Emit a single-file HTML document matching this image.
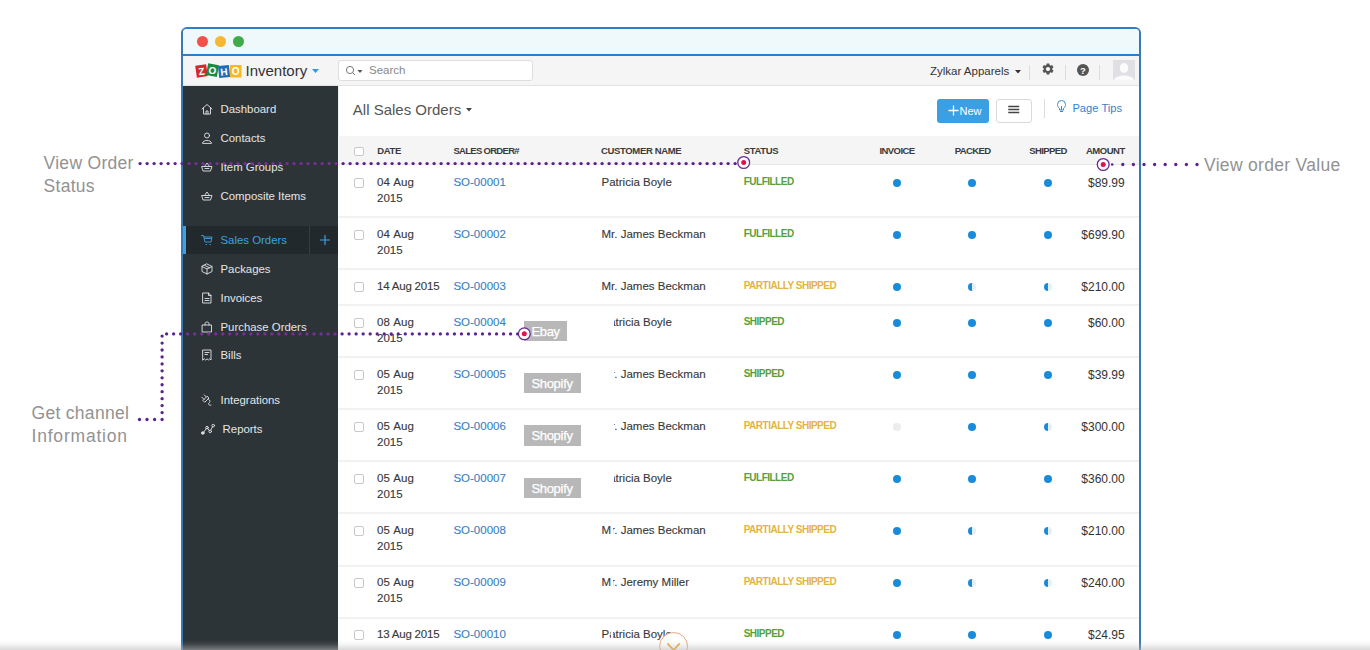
<!DOCTYPE html>
<html><head><meta charset="utf-8">
<style>
*{margin:0;padding:0;box-sizing:border-box}
html,body{width:1370px;height:650px;overflow:hidden;background:#fff;font-family:"Liberation Sans",sans-serif;position:relative}
.a{position:absolute;white-space:nowrap}
.ann{position:absolute;color:#929292;font-size:17.5px;line-height:23px;letter-spacing:0.3px;white-space:nowrap}
#win{position:absolute;left:181px;top:27px;width:960px;height:640px;border:2px solid #3878b4;border-top-color:#2e7ecb;border-radius:6px 6px 0 0;background:#fff;overflow:hidden}
#title{position:absolute;left:0;top:0;width:956px;height:27px;background:#eff9fc;border-bottom:2px solid #2c7dcc}
.tl{position:absolute;top:7px;width:11px;height:11px;border-radius:50%}
#hdr{position:absolute;left:0;top:27px;width:956px;height:30px;background:#f5f5f5;border-bottom:1px solid #e3e3e3}
#side{position:absolute;left:0;top:57px;width:155px;height:600px;background:#2c3438}
.si{position:absolute;color:#e4e6e7;font-size:11.4px;line-height:14px;white-space:nowrap}
.ic{position:absolute;left:18px}
#main{position:absolute;left:155px;top:57px;width:801px;height:600px;background:#fff}
.th{position:absolute;top:10.3px;font-size:9.5px;letter-spacing:-0.35px;font-weight:700;color:#3a3a3a;line-height:10px;white-space:nowrap}
.cb{position:absolute;width:9.5px;height:9.5px;border:1px solid #c8c8c8;border-radius:2px;background:#fff}
.row{position:absolute;left:0;width:801px}
.rs{position:absolute;left:338px;width:801px;height:2px;background:#f2f2f2}
.c{position:absolute;font-size:11.5px;line-height:16px;color:#383838;white-space:nowrap;-webkit-text-stroke:0.12px currentColor}
.lk{color:#3b80c6}
.st{position:absolute;font-size:10px;font-weight:700;letter-spacing:-0.5px;line-height:12px;white-space:nowrap}
.g{color:#55a03a}.y{color:#e3b440}
.dot{position:absolute;width:8px;height:8px;border-radius:50%;background:#1a8bd9}
.dot.hd{background:linear-gradient(90deg,#1a8bd9 50%,#e6eef5 50%)}
.dot.ed{background:#ececec}
.amt{position:absolute;right:14.3px;font-size:12px;line-height:16px;color:#333;text-align:right;white-space:nowrap}
.dl{position:absolute;height:4px;background-image:radial-gradient(circle at 50% 50%,#5b2290 1.5px,transparent 1.9px);background-size:7px 4px;background-repeat:repeat-x}
.dv{position:absolute;width:4px;background-image:radial-gradient(circle at 50% 50%,#5b2290 1.5px,transparent 1.9px);background-size:4px 7px;background-repeat:repeat-y}
.mk{position:absolute;width:13px;height:13px;border:1.3px solid #6a2a90;border-radius:50%;background:#fff}
.mk:after{content:"";position:absolute;left:2.9px;top:2.9px;width:4.6px;height:4.6px;border-radius:50%;background:#e3104f}
.tag{position:absolute;background:#b8b8b8;color:#fff;font-size:13px;letter-spacing:-0.3px;line-height:22px;padding-left:7.6px;white-space:nowrap;-webkit-text-stroke:0.25px #fff}
.sep{position:absolute;width:1px;background:#dcdcdc}
</style></head><body>

<!-- annotations -->
<div class="ann" style="left:43.5px;top:152px">View Order<br>Status</div>
<div class="ann" style="left:31.5px;top:402px">Get channel<br><span style="letter-spacing:0.8px">Information</span></div>
<div class="ann" style="left:1204px;top:154px">View order Value</div>

<div id="win">
  <div id="title">
    <div class="tl" style="left:14px;background:#f2504b"></div>
    <div class="tl" style="left:32px;background:#f5b82e"></div>
    <div class="tl" style="left:50px;background:#3fab4a"></div>
  </div>
  <div id="hdr">
    <!-- zoho logo -->
    <svg class="a" style="left:12.2px;top:6px" width="48" height="18" viewBox="0 0 48 18">
      <g transform="rotate(-8 6 9)"><rect x="1" y="3" width="11" height="12" fill="#d8262e"/><text x="6.5" y="13" font-family="Liberation Sans" font-weight="700" font-size="10" fill="#fff" text-anchor="middle">Z</text></g>
      <g transform="rotate(10 17 8)"><rect x="12" y="2" width="11" height="12" fill="#1a8c40"/><text x="17.5" y="12" font-family="Liberation Sans" font-weight="700" font-size="10" fill="#fff" text-anchor="middle">O</text></g>
      <g transform="rotate(-6 29 9)"><rect x="23.5" y="3.5" width="11" height="12" fill="#1f6fb8"/><text x="29" y="13.5" font-family="Liberation Sans" font-weight="700" font-size="10" fill="#fff" text-anchor="middle">H</text></g>
      <rect x="35" y="3" width="11.5" height="12.5" fill="#f4b828"/><text x="40.7" y="13.2" font-family="Liberation Sans" font-weight="700" font-size="10" fill="#fff" text-anchor="middle">O</text>
    </svg>
    <div class="a" style="left:62.5px;top:6.4px;font-size:15px;line-height:18px;color:#333">Inventory</div>
    <svg class="a" style="left:129px;top:13px" width="7" height="4" viewBox="0 0 7 4"><path d="M0 0H7L3.5 4Z" fill="#2e9be0"/></svg>
    <!-- search -->
    <div class="a" style="left:154.8px;top:3.7px;width:195px;height:21.5px;background:#fff;border:1px solid #dedede;border-radius:3px"></div>
    <svg class="a" style="left:162px;top:8.5px" width="20" height="12" viewBox="0 0 20 12" fill="none" stroke="#777" stroke-width="1"><circle cx="5" cy="5" r="3.6"/><path d="M7.6 7.6L10 10"/><path d="M12.5 5H17.5L15 8Z" fill="#555" stroke="none"/></svg>
    <div class="a" style="left:186px;top:7px;font-size:11.5px;line-height:14px;color:#888">Search</div>
    <!-- right -->
    <div class="a" style="left:747px;top:7.6px;font-size:11.5px;line-height:14px;color:#333">Zylkar Apparels</div>
    <svg class="a" style="left:832px;top:13.8px" width="6" height="4" viewBox="0 0 6 4"><path d="M0 0H6L3 3.5Z" fill="#333"/></svg>
    <div class="sep" style="left:845.5px;top:9px;height:15px"></div>
    <svg class="a" style="left:858px;top:6px" width="14" height="14" viewBox="0 0 24 24"><path fill="#555" d="M19.14 12.94c.04-.3.06-.61.06-.94 0-.32-.02-.64-.07-.94l2.03-1.58a.49.49 0 0 0 .12-.61l-1.92-3.32a.488.488 0 0 0-.59-.22l-2.39.96c-.5-.38-1.03-.7-1.62-.94l-.36-2.54a.484.484 0 0 0-.48-.41h-3.84c-.24 0-.43.17-.47.41l-.36 2.54c-.59.24-1.13.57-1.62.94l-2.39-.96c-.22-.08-.47 0-.59.22L2.74 8.87c-.12.21-.08.47.12.61l2.03 1.58c-.05.3-.09.63-.09.94s.02.64.07.94l-2.03 1.58a.49.49 0 0 0-.12.61l1.92 3.32c.12.22.37.29.59.22l2.39-.96c.5.38 1.03.7 1.62.94l.36 2.54c.05.24.24.41.48.41h3.84c.24 0 .44-.17.47-.41l.36-2.54c.59-.24 1.13-.56 1.62-.94l2.39.96c.22.08.47 0 .59-.22l1.92-3.32c.12-.22.07-.47-.12-.61l-2.01-1.58zM12 15.6c-1.98 0-3.6-1.62-3.6-3.6s1.62-3.6 3.6-3.6 3.6 1.62 3.6 3.6-1.62 3.6-3.6 3.6z"/></svg>
    <div class="sep" style="left:882.3px;top:9px;height:15px"></div>
    <svg class="a" style="left:893.5px;top:7.5px" width="12" height="12" viewBox="0 0 12 12"><circle cx="6" cy="6" r="6" fill="#555"/><text x="6" y="9.6" font-family="Liberation Sans" font-weight="700" font-size="9.5" fill="#fff" text-anchor="middle">?</text></svg>
    <div class="sep" style="left:916px;top:9px;height:15px"></div>
    <svg class="a" style="left:930px;top:4px" width="22" height="20" viewBox="0 0 22 20"><rect width="22" height="20" fill="#dfdfe4"/><ellipse cx="11" cy="8" rx="4.2" ry="5" fill="#fbfbfc"/><path d="M1 20C2 14 20 14 21 20Z" fill="#fbfbfc"/></svg>
  </div>
  <div id="side">
    <div class="a" style="left:0;top:140px;width:155px;height:28px;background:#22292c"></div>
    <div class="a" style="left:0;top:140px;width:3px;height:28px;background:#3ea1e2"></div>
    <div class="a" style="left:126px;top:140px;width:1px;height:28px;background:#353d41"></div>
    <svg class="a" style="left:137px;top:149px" width="10" height="10" viewBox="0 0 10 10"><path d="M5 0V10M0 5H10" stroke="#3ea1e2" stroke-width="1.2"/></svg>
<svg class="ic" style="top:17px" width="14" height="12" viewBox="0 0 14 12" fill="none" stroke="#e4e6e7" stroke-width="0.9" stroke-linejoin="round" stroke-linecap="round"><path d="M1 6 L6 1.5 L11 6 M2.5 5 V11 H9.5 V5 M5 11 V8 H7 V11" /></svg>
<div class="si" style="left:37.5px;top:16px;color:#e4e6e7">Dashboard</div>
<svg class="ic" style="top:46px" width="14" height="12" viewBox="0 0 14 12" fill="none" stroke="#e4e6e7" stroke-width="0.9" stroke-linejoin="round" stroke-linecap="round"><circle cx="6" cy="3.5" r="2.5"/><path d="M1.5 11 C1.5 7.5 10.5 7.5 10.5 11 Z"/></svg>
<div class="si" style="left:37.5px;top:45px;color:#e4e6e7">Contacts</div>
<svg class="ic" style="top:74.9px" width="14" height="12" viewBox="0 0 14 12" fill="none" stroke="#e4e6e7" stroke-width="0.9" stroke-linejoin="round" stroke-linecap="round"><path d="M1 5.5 H11 L9.5 10 H2.5 Z M3.5 5.5 L6 2 L8.5 5.5 M4 7.5 H8"/></svg>
<div class="si" style="left:37.5px;top:73.9px;color:#e4e6e7">Item Groups</div>
<svg class="ic" style="top:103.9px" width="14" height="12" viewBox="0 0 14 12" fill="none" stroke="#e4e6e7" stroke-width="0.9" stroke-linejoin="round" stroke-linecap="round"><path d="M1 5.5 H11 L9.5 10 H2.5 Z M3.5 5.5 L6 2 L8.5 5.5 M4 7.5 H8"/></svg>
<div class="si" style="left:37.5px;top:102.9px;color:#e4e6e7">Composite Items</div>
<svg class="ic" style="top:148px" width="14" height="12" viewBox="0 0 14 12" fill="none" stroke="#3ea1e2" stroke-width="0.9" stroke-linejoin="round" stroke-linecap="round"><path d="M0.5 1.5 H2.5 L4 8 H10 L11 3 H3 M4.5 4.5 H10 M5 10.5 h0.5 M9 10.5 h0.5"/></svg>
<div class="si" style="left:37.5px;top:147px;color:#3ea1e2">Sales Orders</div>
<svg class="ic" style="top:177px" width="14" height="12" viewBox="0 0 14 12" fill="none" stroke="#e4e6e7" stroke-width="0.9" stroke-linejoin="round" stroke-linecap="round"><path d="M6 1 L11 3.5 V8.5 L6 11 L1 8.5 V3.5 Z M1 3.5 L6 6 L11 3.5 M6 6 V11 M3.5 2.3 L8.5 4.8"/></svg>
<div class="si" style="left:37.5px;top:176px;color:#e4e6e7">Packages</div>
<svg class="ic" style="top:205.6px" width="14" height="12" viewBox="0 0 14 12" fill="none" stroke="#e4e6e7" stroke-width="0.9" stroke-linejoin="round" stroke-linecap="round"><path d="M2 1 H7.5 L10 3.5 V11 H2 Z M7.5 1 V3.5 H10 M4 6.5 H8 M4 8.5 H8"/></svg>
<div class="si" style="left:37.5px;top:204.6px;color:#e4e6e7">Invoices</div>
<svg class="ic" style="top:234.6px" width="14" height="12" viewBox="0 0 14 12" fill="none" stroke="#e4e6e7" stroke-width="0.9" stroke-linejoin="round" stroke-linecap="round"><path d="M1.5 4 H10.5 V11 H1.5 Z M4 4 V2.5 C4 0.5 8 0.5 8 2.5 V4"/></svg>
<div class="si" style="left:37.5px;top:233.6px;color:#e4e6e7">Purchase Orders</div>
<svg class="ic" style="top:263.4px" width="14" height="12" viewBox="0 0 14 12" fill="none" stroke="#e4e6e7" stroke-width="0.9" stroke-linejoin="round" stroke-linecap="round"><path d="M2 1 H10 V11 L8.7 9.8 L7.3 11 L6 9.8 L4.7 11 L3.3 9.8 L2 11 Z M4 3.5 H8 M4 5.5 H6.5"/></svg>
<div class="si" style="left:37.5px;top:262.4px;color:#e4e6e7">Bills</div>
<svg class="ic" style="top:308px" width="14" height="12" viewBox="0 0 14 12" fill="none" stroke="#e4e6e7" stroke-width="0.9" stroke-linejoin="round" stroke-linecap="round"><path d="M0.8 3.2 L3 5.4 M3.2 0.8 L5.4 3 M2.2 6.2 L6.2 2.2 L8 4 L4 8 Z M7.2 5 C9.8 6.5 9 8 8 9 C7 10 7.5 11.5 10 11.2"/></svg>
<div class="si" style="left:37.5px;top:307px;color:#e4e6e7">Integrations</div>
<svg class="ic" style="top:336.6px" width="14" height="12" viewBox="0 0 14 12" fill="none" stroke="#e4e6e7" stroke-width="0.9" stroke-linejoin="round" stroke-linecap="round"><path d="M2.6 9.2 L5.4 5.4 M6.6 5.4 L8.4 7.6 M9.8 7 L11.6 3.6"/><circle cx="1.8" cy="10" r="1.3" fill="#cfd3d5"/><circle cx="6" cy="4.6" r="1.3"/><circle cx="9.2" cy="8.4" r="1.3"/><circle cx="12.2" cy="2.6" r="1.3"/></svg>
<div class="si" style="left:39.6px;top:335.6px;color:#e4e6e7">Reports</div>
  </div>
  <div id="main">
    <div class="a" style="left:0;top:0;width:1px;height:50px;background:#f0f0f0"></div>
    <div class="a" style="left:14.8px;top:14.7px;font-size:15px;line-height:18px;color:#555">All Sales Orders</div>
    <svg class="a" style="left:128px;top:22px" width="6" height="4" viewBox="0 0 6 4"><path d="M0 0H6L3 3.5Z" fill="#444"/></svg>
    <div class="a" style="left:599.2px;top:13px;width:51.4px;height:23.7px;background:#3aa0e3;border-radius:3px"></div>
    <svg class="a" style="left:609.5px;top:19px" width="11" height="11" viewBox="0 0 11 11"><path d="M5.5 0.5V10.5M0.5 5.5H10.5" stroke="#fff" stroke-width="1.3"/></svg>
    <div class="a" style="left:621.5px;top:17.8px;font-size:11px;line-height:14px;color:#fff;letter-spacing:0px">New</div>
    <div class="a" style="left:658.4px;top:12.5px;width:35.3px;height:24.5px;background:#fff;border:1px solid #dadada;border-radius:3px"></div>
    <svg class="a" style="left:670px;top:19.3px" width="11.5" height="9" viewBox="0 0 11 9"><path d="M0 1.5H11M0 4.5H11M0 7.5H11" stroke="#444" stroke-width="1.3"/></svg>
    <div class="sep" style="left:706px;top:12.5px;height:19.5px"></div>
    <svg class="a" style="left:719px;top:14px" width="9" height="13" viewBox="0 0 9 13" fill="none" stroke="#3a8ad0" stroke-width="1"><path d="M2.5 8.5C1 7 0.5 6 0.5 4.5A4 4 0 0 1 8.5 4.5C8.5 6 8 7 6.5 8.5V10H2.5Z"/><path d="M3 11.5H6"/><path d="M4.5 10V6"/></svg>
    <div class="a" style="left:734.4px;top:14.8px;font-size:11.2px;line-height:14px;color:#3b80c6">Page Tips</div>

    <!-- table header -->
    <div class="a" style="left:0;top:50px;width:801px;height:28px;background:#f5f5f5">
      <div class="cb" style="left:16px;top:10.5px"></div>
      <div class="th" style="left:39.2px">DATE</div>
      <div class="th" style="left:115.4px;letter-spacing:-0.7px">SALES ORDER#</div>
      <div class="th" style="left:263px">CUSTOMER NAME</div>
      <div class="th" style="left:405.7px">STATUS</div>
      <div class="th" style="left:519px;width:80px;text-align:center;letter-spacing:-0.6px">INVOICE</div>
      <div class="th" style="left:594.6px;width:80px;text-align:center;letter-spacing:-0.6px">PACKED</div>
      <div class="th" style="left:670px;width:80px;text-align:center;letter-spacing:-0.6px">SHIPPED</div>
      <div class="th" style="right:14.3px;text-align:right;letter-spacing:-0.5px">AMOUNT</div>
    </div>
<div class="row" style="top:78px;height:52px"><div class="cb" style="left:16px;top:14.2px"></div><div class="c" style="left:39px;top:10.2px;word-spacing:1px">04 Aug<br>2015</div><div class="c lk" style="left:115.4px;top:10.2px">SO-00001</div><div class="c" style="left:263.5px;top:10.2px">Patricia Boyle</div><div class="st g" style="left:405.7px;top:12px">FULFILLED</div><div class="dot" style="left:554.8px;top:14.8px"></div><div class="dot" style="left:630.2px;top:14.8px"></div><div class="dot" style="left:705.6px;top:14.8px"></div><div class="amt" style="top:10.6px">$89.99</div></div>
<div class="row" style="top:130px;height:52px"><div class="cb" style="left:16px;top:14.2px"></div><div class="c" style="left:39px;top:10.2px;word-spacing:1px">04 Aug<br>2015</div><div class="c lk" style="left:115.4px;top:10.2px">SO-00002</div><div class="c" style="left:263.5px;top:10.2px">Mr. James Beckman</div><div class="st g" style="left:405.7px;top:12px">FULFILLED</div><div class="dot" style="left:554.8px;top:14.8px"></div><div class="dot" style="left:630.2px;top:14.8px"></div><div class="dot" style="left:705.6px;top:14.8px"></div><div class="amt" style="top:10.6px">$699.90</div></div>
<div class="row" style="top:182px;height:36px"><div class="cb" style="left:16px;top:14.2px"></div><div class="c" style="left:39px;top:10.2px;letter-spacing:-0.2px">14 Aug 2015</div><div class="c lk" style="left:115.4px;top:10.2px">SO-00003</div><div class="c" style="left:263.5px;top:10.2px">Mr. James Beckman</div><div class="st y" style="left:405.7px;top:12px">PARTIALLY SHIPPED</div><div class="dot" style="left:554.8px;top:14.8px"></div><div class="dot hd" style="left:630.2px;top:14.8px"></div><div class="dot hd" style="left:705.6px;top:14.8px"></div><div class="amt" style="top:10.6px">$210.00</div></div>
<div class="row" style="top:218px;height:52px"><div class="cb" style="left:16px;top:14.2px"></div><div class="c" style="left:39px;top:10.2px;word-spacing:1px">08 Aug<br>2015</div><div class="c lk" style="left:115.4px;top:10.2px">SO-00004</div><div class="c" style="left:263.5px;top:10.2px">Patricia Boyle</div><div class="st g" style="left:405.7px;top:12px">SHIPPED</div><div class="dot" style="left:554.8px;top:14.8px"></div><div class="dot" style="left:630.2px;top:14.8px"></div><div class="dot" style="left:705.6px;top:14.8px"></div><div class="amt" style="top:10.6px">$60.00</div></div>
<div class="row" style="top:270px;height:52px"><div class="cb" style="left:16px;top:14.2px"></div><div class="c" style="left:39px;top:10.2px;word-spacing:1px">05 Aug<br>2015</div><div class="c lk" style="left:115.4px;top:10.2px">SO-00005</div><div class="c" style="left:263.5px;top:10.2px">Mr. James Beckman</div><div class="st g" style="left:405.7px;top:12px">SHIPPED</div><div class="dot" style="left:554.8px;top:14.8px"></div><div class="dot" style="left:630.2px;top:14.8px"></div><div class="dot" style="left:705.6px;top:14.8px"></div><div class="amt" style="top:10.6px">$39.99</div></div>
<div class="row" style="top:322px;height:52px"><div class="cb" style="left:16px;top:14.2px"></div><div class="c" style="left:39px;top:10.2px;word-spacing:1px">05 Aug<br>2015</div><div class="c lk" style="left:115.4px;top:10.2px">SO-00006</div><div class="c" style="left:263.5px;top:10.2px">Mr. James Beckman</div><div class="st y" style="left:405.7px;top:12px">PARTIALLY SHIPPED</div><div class="dot ed" style="left:554.8px;top:14.8px"></div><div class="dot" style="left:630.2px;top:14.8px"></div><div class="dot hd" style="left:705.6px;top:14.8px"></div><div class="amt" style="top:10.6px">$300.00</div></div>
<div class="row" style="top:374px;height:52px"><div class="cb" style="left:16px;top:14.2px"></div><div class="c" style="left:39px;top:10.2px;word-spacing:1px">05 Aug<br>2015</div><div class="c lk" style="left:115.4px;top:10.2px">SO-00007</div><div class="c" style="left:263.5px;top:10.2px">Patricia Boyle</div><div class="st g" style="left:405.7px;top:12px">FULFILLED</div><div class="dot" style="left:554.8px;top:14.8px"></div><div class="dot" style="left:630.2px;top:14.8px"></div><div class="dot" style="left:705.6px;top:14.8px"></div><div class="amt" style="top:10.6px">$360.00</div></div>
<div class="row" style="top:426px;height:52px"><div class="cb" style="left:16px;top:14.2px"></div><div class="c" style="left:39px;top:10.2px;word-spacing:1px">05 Aug<br>2015</div><div class="c lk" style="left:115.4px;top:10.2px">SO-00008</div><div class="c" style="left:263.5px;top:10.2px">Mr. James Beckman</div><div class="st y" style="left:405.7px;top:12px">PARTIALLY SHIPPED</div><div class="dot" style="left:554.8px;top:14.8px"></div><div class="dot hd" style="left:630.2px;top:14.8px"></div><div class="dot hd" style="left:705.6px;top:14.8px"></div><div class="amt" style="top:10.6px">$210.00</div></div>
<div class="row" style="top:478px;height:52px"><div class="cb" style="left:16px;top:14.2px"></div><div class="c" style="left:39px;top:10.2px;word-spacing:1px">05 Aug<br>2015</div><div class="c lk" style="left:115.4px;top:10.2px">SO-00009</div><div class="c" style="left:263.5px;top:10.2px">Mr. Jeremy Miller</div><div class="st y" style="left:405.7px;top:12px">PARTIALLY SHIPPED</div><div class="dot" style="left:554.8px;top:14.8px"></div><div class="dot hd" style="left:630.2px;top:14.8px"></div><div class="dot hd" style="left:705.6px;top:14.8px"></div><div class="amt" style="top:10.6px">$240.00</div></div>
<div class="row" style="top:530px;height:52px"><div class="cb" style="left:16px;top:14.2px"></div><div class="c" style="left:39px;top:10.2px;letter-spacing:-0.2px">13 Aug 2015</div><div class="c lk" style="left:115.4px;top:10.2px">SO-00010</div><div class="c" style="left:263.5px;top:10.2px">Patricia Boyle</div><div class="st g" style="left:405.7px;top:12px">SHIPPED</div><div class="dot" style="left:554.8px;top:14.8px"></div><div class="dot" style="left:630.2px;top:14.8px"></div><div class="dot" style="left:705.6px;top:14.8px"></div><div class="amt" style="top:10.6px">$24.95</div></div>
  </div>
</div>

<!-- channel tags + overlays -->
<div class="a" style="left:517px;top:305px;width:97px;height:208px;background:#fff"></div>
<div class="a" style="left:611.3px;top:513px;width:2.2px;height:137px;background:#fff"></div>
<div class="rs" style="top:216px"></div><div class="rs" style="top:268px"></div><div class="rs" style="top:304px"></div><div class="rs" style="top:356px"></div><div class="rs" style="top:408px"></div><div class="rs" style="top:460px"></div><div class="rs" style="top:512px"></div><div class="rs" style="top:565px"></div><div class="rs" style="top:617px"></div><div class="rs" style="top:164px;height:1px;background:#e9e9e9"></div>
<div class="tag" style="left:523.8px;top:320.8px;width:43px;height:20px">Ebay</div>
<div class="tag" style="left:523.8px;top:373px;width:57px;height:20.4px">Shopify</div>
<div class="tag" style="left:523.8px;top:425.4px;width:57px;height:20.4px">Shopify</div>
<div class="tag" style="left:523.8px;top:477.8px;width:57px;height:20.4px">Shopify</div>

<!-- dotted lines -->
<svg class="a" style="left:0;top:0" width="1370" height="650" viewBox="0 0 1370 650"><circle cx="140.10" cy="163.60" r="1.65" fill="#5b2290"/><circle cx="147.10" cy="163.60" r="1.65" fill="#5b2290"/><circle cx="154.10" cy="163.60" r="1.65" fill="#5b2290"/><circle cx="161.10" cy="163.60" r="1.65" fill="#5b2290"/><circle cx="168.10" cy="163.60" r="1.65" fill="#5b2290"/><circle cx="175.10" cy="163.60" r="1.65" fill="#5b2290"/><circle cx="182.10" cy="163.60" r="1.65" fill="#5b2290"/><circle cx="189.10" cy="163.60" r="1.65" fill="#7a2d9c"/><circle cx="196.10" cy="163.60" r="1.65" fill="#7a2d9c"/><circle cx="203.10" cy="163.60" r="1.65" fill="#7a2d9c"/><circle cx="210.10" cy="163.60" r="1.65" fill="#7a2d9c"/><circle cx="217.10" cy="163.60" r="1.65" fill="#7a2d9c"/><circle cx="224.10" cy="163.60" r="1.65" fill="#7a2d9c"/><circle cx="231.10" cy="163.60" r="1.65" fill="#7a2d9c"/><circle cx="238.10" cy="163.60" r="1.65" fill="#7a2d9c"/><circle cx="245.10" cy="163.60" r="1.65" fill="#7a2d9c"/><circle cx="252.10" cy="163.60" r="1.65" fill="#7a2d9c"/><circle cx="259.10" cy="163.60" r="1.65" fill="#7a2d9c"/><circle cx="266.10" cy="163.60" r="1.65" fill="#7a2d9c"/><circle cx="273.10" cy="163.60" r="1.65" fill="#7a2d9c"/><circle cx="280.10" cy="163.60" r="1.65" fill="#7a2d9c"/><circle cx="287.10" cy="163.60" r="1.65" fill="#7a2d9c"/><circle cx="294.10" cy="163.60" r="1.65" fill="#7a2d9c"/><circle cx="301.10" cy="163.60" r="1.65" fill="#7a2d9c"/><circle cx="308.10" cy="163.60" r="1.65" fill="#7a2d9c"/><circle cx="315.10" cy="163.60" r="1.65" fill="#7a2d9c"/><circle cx="322.10" cy="163.60" r="1.65" fill="#7a2d9c"/><circle cx="329.10" cy="163.60" r="1.65" fill="#7a2d9c"/><circle cx="336.10" cy="163.60" r="1.65" fill="#7a2d9c"/><circle cx="343.10" cy="163.60" r="1.65" fill="#5b2290"/><circle cx="350.10" cy="163.60" r="1.65" fill="#5b2290"/><circle cx="357.10" cy="163.60" r="1.65" fill="#5b2290"/><circle cx="364.10" cy="163.60" r="1.65" fill="#5b2290"/><circle cx="371.10" cy="163.60" r="1.65" fill="#5b2290"/><circle cx="378.10" cy="163.60" r="1.65" fill="#5b2290"/><circle cx="385.10" cy="163.60" r="1.65" fill="#5b2290"/><circle cx="392.10" cy="163.60" r="1.65" fill="#5b2290"/><circle cx="399.10" cy="163.60" r="1.65" fill="#5b2290"/><circle cx="406.10" cy="163.60" r="1.65" fill="#5b2290"/><circle cx="413.10" cy="163.60" r="1.65" fill="#5b2290"/><circle cx="420.10" cy="163.60" r="1.65" fill="#5b2290"/><circle cx="427.10" cy="163.60" r="1.65" fill="#5b2290"/><circle cx="434.10" cy="163.60" r="1.65" fill="#5b2290"/><circle cx="441.10" cy="163.60" r="1.65" fill="#5b2290"/><circle cx="448.10" cy="163.60" r="1.65" fill="#5b2290"/><circle cx="455.10" cy="163.60" r="1.65" fill="#5b2290"/><circle cx="462.10" cy="163.60" r="1.65" fill="#5b2290"/><circle cx="469.10" cy="163.60" r="1.65" fill="#5b2290"/><circle cx="476.10" cy="163.60" r="1.65" fill="#5b2290"/><circle cx="483.10" cy="163.60" r="1.65" fill="#5b2290"/><circle cx="490.10" cy="163.60" r="1.65" fill="#5b2290"/><circle cx="497.10" cy="163.60" r="1.65" fill="#5b2290"/><circle cx="504.10" cy="163.60" r="1.65" fill="#5b2290"/><circle cx="511.10" cy="163.60" r="1.65" fill="#5b2290"/><circle cx="518.10" cy="163.60" r="1.65" fill="#5b2290"/><circle cx="525.10" cy="163.60" r="1.65" fill="#5b2290"/><circle cx="532.10" cy="163.60" r="1.65" fill="#5b2290"/><circle cx="539.10" cy="163.60" r="1.65" fill="#5b2290"/><circle cx="546.10" cy="163.60" r="1.65" fill="#5b2290"/><circle cx="553.10" cy="163.60" r="1.65" fill="#5b2290"/><circle cx="560.10" cy="163.60" r="1.65" fill="#5b2290"/><circle cx="567.10" cy="163.60" r="1.65" fill="#5b2290"/><circle cx="574.10" cy="163.60" r="1.65" fill="#5b2290"/><circle cx="581.10" cy="163.60" r="1.65" fill="#5b2290"/><circle cx="588.10" cy="163.60" r="1.65" fill="#5b2290"/><circle cx="595.10" cy="163.60" r="1.65" fill="#5b2290"/><circle cx="602.10" cy="163.60" r="1.65" fill="#5b2290"/><circle cx="609.10" cy="163.60" r="1.65" fill="#5b2290"/><circle cx="616.10" cy="163.60" r="1.65" fill="#5b2290"/><circle cx="623.10" cy="163.60" r="1.65" fill="#5b2290"/><circle cx="630.10" cy="163.60" r="1.65" fill="#5b2290"/><circle cx="637.10" cy="163.60" r="1.65" fill="#5b2290"/><circle cx="644.10" cy="163.60" r="1.65" fill="#5b2290"/><circle cx="651.10" cy="163.60" r="1.65" fill="#5b2290"/><circle cx="658.10" cy="163.60" r="1.65" fill="#5b2290"/><circle cx="665.10" cy="163.60" r="1.65" fill="#5b2290"/><circle cx="672.10" cy="163.60" r="1.65" fill="#5b2290"/><circle cx="679.10" cy="163.60" r="1.65" fill="#5b2290"/><circle cx="686.10" cy="163.60" r="1.65" fill="#5b2290"/><circle cx="693.10" cy="163.60" r="1.65" fill="#5b2290"/><circle cx="700.10" cy="163.60" r="1.65" fill="#5b2290"/><circle cx="707.10" cy="163.60" r="1.65" fill="#5b2290"/><circle cx="714.10" cy="163.60" r="1.65" fill="#5b2290"/><circle cx="721.10" cy="163.60" r="1.65" fill="#5b2290"/><circle cx="728.10" cy="163.60" r="1.65" fill="#5b2290"/><circle cx="735.10" cy="163.60" r="1.65" fill="#5b2290"/><circle cx="1112.20" cy="164.50" r="1.3" fill="#5b2290"/><circle cx="1122.80" cy="164.50" r="1.65" fill="#5b2290"/><circle cx="1133.40" cy="164.50" r="1.65" fill="#5b2290"/><circle cx="1144.00" cy="164.50" r="1.65" fill="#5b2290"/><circle cx="1154.60" cy="164.50" r="1.65" fill="#5b2290"/><circle cx="1165.20" cy="164.50" r="1.65" fill="#5b2290"/><circle cx="1175.80" cy="164.50" r="1.65" fill="#5b2290"/><circle cx="1186.40" cy="164.50" r="1.65" fill="#5b2290"/><circle cx="1197.00" cy="164.50" r="1.65" fill="#5b2290"/><circle cx="162.10" cy="336.10" r="1.65" fill="#5b2290"/><circle cx="162.10" cy="343.05" r="1.65" fill="#5b2290"/><circle cx="162.10" cy="350.00" r="1.65" fill="#5b2290"/><circle cx="162.10" cy="356.95" r="1.65" fill="#5b2290"/><circle cx="162.10" cy="363.90" r="1.65" fill="#5b2290"/><circle cx="162.10" cy="370.85" r="1.65" fill="#5b2290"/><circle cx="162.10" cy="377.80" r="1.65" fill="#5b2290"/><circle cx="162.10" cy="384.75" r="1.65" fill="#5b2290"/><circle cx="162.10" cy="391.70" r="1.65" fill="#5b2290"/><circle cx="162.10" cy="398.65" r="1.65" fill="#5b2290"/><circle cx="162.10" cy="405.60" r="1.65" fill="#5b2290"/><circle cx="162.10" cy="412.55" r="1.65" fill="#5b2290"/><circle cx="162.10" cy="419.50" r="1.65" fill="#5b2290"/><circle cx="139.50" cy="419.50" r="1.65" fill="#5b2290"/><circle cx="147.00" cy="419.50" r="1.65" fill="#5b2290"/><circle cx="154.60" cy="419.50" r="1.65" fill="#5b2290"/><circle cx="166.60" cy="333.90" r="1.65" fill="#5b2290"/><circle cx="173.62" cy="333.90" r="1.65" fill="#5b2290"/><circle cx="180.64" cy="333.90" r="1.65" fill="#5b2290"/><circle cx="187.66" cy="333.90" r="1.65" fill="#7a2d9c"/><circle cx="194.68" cy="333.90" r="1.65" fill="#7a2d9c"/><circle cx="201.70" cy="333.90" r="1.65" fill="#7a2d9c"/><circle cx="208.72" cy="333.90" r="1.65" fill="#7a2d9c"/><circle cx="215.74" cy="333.90" r="1.65" fill="#7a2d9c"/><circle cx="222.76" cy="333.90" r="1.65" fill="#7a2d9c"/><circle cx="229.78" cy="333.90" r="1.65" fill="#7a2d9c"/><circle cx="236.80" cy="333.90" r="1.65" fill="#7a2d9c"/><circle cx="243.82" cy="333.90" r="1.65" fill="#7a2d9c"/><circle cx="250.84" cy="333.90" r="1.65" fill="#7a2d9c"/><circle cx="257.86" cy="333.90" r="1.65" fill="#7a2d9c"/><circle cx="264.88" cy="333.90" r="1.65" fill="#7a2d9c"/><circle cx="271.90" cy="333.90" r="1.65" fill="#7a2d9c"/><circle cx="278.92" cy="333.90" r="1.65" fill="#7a2d9c"/><circle cx="285.94" cy="333.90" r="1.65" fill="#7a2d9c"/><circle cx="292.96" cy="333.90" r="1.65" fill="#7a2d9c"/><circle cx="299.98" cy="333.90" r="1.65" fill="#7a2d9c"/><circle cx="307.00" cy="333.90" r="1.65" fill="#7a2d9c"/><circle cx="314.02" cy="333.90" r="1.65" fill="#7a2d9c"/><circle cx="321.04" cy="333.90" r="1.65" fill="#7a2d9c"/><circle cx="328.06" cy="333.90" r="1.65" fill="#7a2d9c"/><circle cx="335.08" cy="333.90" r="1.65" fill="#7a2d9c"/><circle cx="342.10" cy="333.90" r="1.65" fill="#5b2290"/><circle cx="349.12" cy="333.90" r="1.65" fill="#5b2290"/><circle cx="356.14" cy="333.90" r="1.65" fill="#5b2290"/><circle cx="363.16" cy="333.90" r="1.65" fill="#5b2290"/><circle cx="370.18" cy="333.90" r="1.65" fill="#5b2290"/><circle cx="377.20" cy="333.90" r="1.65" fill="#5b2290"/><circle cx="384.22" cy="333.90" r="1.65" fill="#5b2290"/><circle cx="391.24" cy="333.90" r="1.65" fill="#5b2290"/><circle cx="398.26" cy="333.90" r="1.65" fill="#5b2290"/><circle cx="405.28" cy="333.90" r="1.65" fill="#5b2290"/><circle cx="412.30" cy="333.90" r="1.65" fill="#5b2290"/><circle cx="419.32" cy="333.90" r="1.65" fill="#5b2290"/><circle cx="426.34" cy="333.90" r="1.65" fill="#5b2290"/><circle cx="433.36" cy="333.90" r="1.65" fill="#5b2290"/><circle cx="440.38" cy="333.90" r="1.65" fill="#5b2290"/><circle cx="447.40" cy="333.90" r="1.65" fill="#5b2290"/><circle cx="454.42" cy="333.90" r="1.65" fill="#5b2290"/><circle cx="461.44" cy="333.90" r="1.65" fill="#5b2290"/><circle cx="468.46" cy="333.90" r="1.65" fill="#5b2290"/><circle cx="475.48" cy="333.90" r="1.65" fill="#5b2290"/><circle cx="482.50" cy="333.90" r="1.65" fill="#5b2290"/><circle cx="489.52" cy="333.90" r="1.65" fill="#5b2290"/><circle cx="496.54" cy="333.90" r="1.65" fill="#5b2290"/><circle cx="503.56" cy="333.90" r="1.65" fill="#5b2290"/><circle cx="510.58" cy="333.90" r="1.65" fill="#5b2290"/><circle cx="517.60" cy="333.90" r="1.65" fill="#5b2290"/><circle cx="743.7" cy="162.5" r="5.9" fill="#fff" stroke="#6a2a90" stroke-width="1.3"/><circle cx="743.7" cy="162.5" r="2.5" fill="#e3104f"/><circle cx="1103.2" cy="164.5" r="5.9" fill="#fff" stroke="#6a2a90" stroke-width="1.3"/><circle cx="1103.2" cy="164.5" r="2.5" fill="#e3104f"/><circle cx="524.3" cy="333.8" r="5.9" fill="#fff" stroke="#6a2a90" stroke-width="1.3"/><circle cx="524.3" cy="333.8" r="2.5" fill="#e3104f"/></svg>

<!-- bottom gradient -->
<svg class="a" style="left:659px;top:632px" width="30" height="30" viewBox="0 0 30 30"><circle cx="14.6" cy="14.5" r="14" fill="#fff" stroke="#eaa77c" stroke-width="1"/><path d="M8.5 11.5L14.6 18L20.7 11.5" fill="none" stroke="#f2a52e" stroke-width="1.8"/></svg>
<div class="a" style="left:0;top:640px;width:1370px;height:10px;background:linear-gradient(180deg,rgba(185,185,185,0) 0%,rgba(185,185,185,0.12) 40%,rgba(185,185,185,0.55) 100%)"></div>
</body></html>
